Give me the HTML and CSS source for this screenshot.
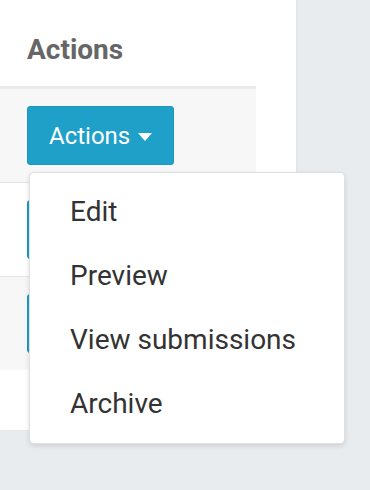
FILE: index.html
```html
<!DOCTYPE html>
<html lang="en">
<head>
  <meta charset="UTF-8" />
  <meta name="viewport" content="width=device-width, initial-scale=1.0" />
  <title>Forms</title>
  <link rel="stylesheet" href="styles.css">
</head>
<body>
  <div class="panel">
    <div class="forms-table">
      <div class="table-head">Actions</div>

      <div class="table-row striped">
        <div class="btn-group">
          <button class="btn-actions">Actions <span class="caret"></span></button>
          <ul class="dropdown-menu">
            <li><a href="#">Edit</a></li>
            <li><a href="#">Preview</a></li>
            <li><a href="#">View submissions</a></li>
            <li><a href="#">Archive</a></li>
          </ul>
        </div>
      </div>

      <div class="table-row">
        <button class="btn-actions">Actions <span class="caret"></span></button>
      </div>

      <div class="table-row striped">
        <button class="btn-actions">Actions <span class="caret"></span></button>
      </div>
    </div>
  </div>
</body>
</html>
```

FILE: styles.css
```css
body {
  margin: 0;
  padding: 0;
  background: #e9ecef;
  font-family: Roboto, "Liberation Sans", sans-serif;
  height: 490px;
  overflow: hidden;
}

.panel {
  width: 296px;
  height: 430px;
  background: #fff;
  box-shadow: 1px 0 2px rgba(0, 0, 0, 0.04);
}

.forms-table {
  width: 256px;
}

.table-head {
  padding: 33px 0 19px 27px;
  font-size: 28px;
  line-height: 34px;
  font-weight: bold;
  color: #666;
  border-bottom: 3px solid #e9eaec;
}

.table-row {
  padding: 17px 0 17px 27px;
  border-bottom: 1px solid #e3e6e9;
  height: 59px;
}

.table-row:last-child {
  border-bottom: none;
}

.table-row.striped {
  background: #f7f7f8;
}

.btn-group {
  position: relative;
}

.btn-actions {
  box-sizing: border-box;
  height: 59px;
  width: 147px;
  display: inline-flex;
  align-items: center;
  padding: 0 0 0 21px;
  margin: 0;
  background: #1fa0c8;
  border: 1px solid #1c98bf;
  border-radius: 3px;
  color: #fff;
  font-family: Roboto, "Liberation Sans", sans-serif;
  font-size: 24px;
  cursor: pointer;
}

.caret {
  display: inline-block;
  width: 0;
  height: 0;
  margin-left: 8px;
  margin-top: 2px;
  border-top: 8px solid #fff;
  border-left: 7px solid transparent;
  border-right: 7px solid transparent;
}

/* dropdown opened under the first button */
.dropdown-menu {
  position: absolute;
  left: 2px;
  top: 66px;
  z-index: 10;
  width: 316px;
  box-sizing: border-box;
  margin: 0;
  padding: 7px 0;
  list-style: none;
  background: #fff;
  border: 1px solid rgba(0, 0, 0, 0.12);
  border-radius: 5px;
  box-shadow: 0 2px 5px rgba(0, 0, 0, 0.12);
}

.dropdown-menu a {
  display: block;
  padding: 11px 40px;
  font-size: 28px;
  line-height: 42px;
  color: #333;
  text-decoration: none;
}
```
